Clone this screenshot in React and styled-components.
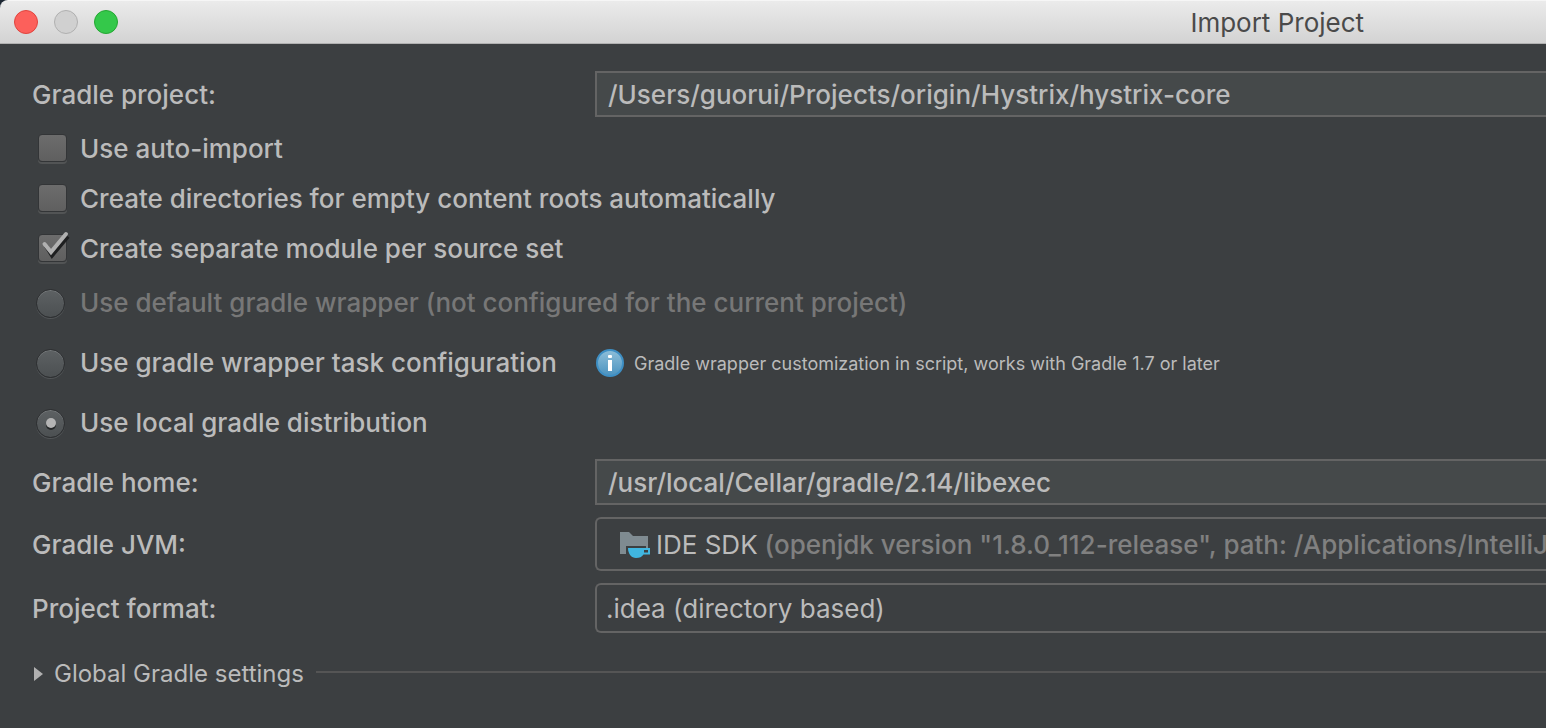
import React, { useState } from "react";
import styled, { createGlobalStyle } from "styled-components";

const GlobalStyle = createGlobalStyle`
  *, *::before, *::after { box-sizing: border-box; }
  html, body, #root { min-height: 100vh; }
  body {
    margin: 0;
    background: #3c3f41;
    color: #bbbbbb;
    font-family: Inter, "Liberation Sans", sans-serif;
    font-size: 26px;
    font-weight: 500;
    line-height: 32px;
    overflow-x: hidden;
  }
  input, select, button { font: inherit; color: inherit; }
`;

const Window = styled.main`
  background: #3c3f41;
  overflow: hidden;
`;

const TitleBar = styled.header`
  display: grid;
  grid-template-columns: 77% 1fr;
  align-items: center;
  height: 44px;
  background: linear-gradient(#ebebeb, #d3d3d3);
  border-top: 1px solid #f6f6f6;
  border-bottom: 1px solid #b1b1b1;
  border-top-left-radius: 8px;
`;

const Corner = styled.div`
  background: #1d2733;
`;

const Lights = styled.div`
  display: flex;
  gap: 16px;
  padding-left: 14px;
`;

const Light = styled.button`
  width: 24px;
  height: 24px;
  padding: 0;
  border-radius: 50%;
  border: 1px solid ${(p) => p.$edge};
  background: ${(p) => p.$fill};
`;

const Title = styled.h1`
  margin: 0;
  padding-top: 2px;
  font-size: 26px;
  line-height: 32px;
  font-weight: 400;
  color: #4a4a4a;
  white-space: nowrap;
`;

const Form = styled.form`
  display: flex;
  flex-direction: column;
  padding: 27px 0 32px 32px;
`;

const FieldRow = styled.div`
  display: grid;
  grid-template-columns: 563px 1fr;
  align-items: center;
`;

const FieldLabel = styled.label`
  padding-top: 2px;
`;

const Fields = styled.div`
  display: flex;
  flex-direction: column;
  gap: 12px;
  margin-top: 6px;
`;

const TextField = styled.input`
  width: 100%;
  min-width: 0;
  height: 46px;
  padding: 0 11px;
  border: 2px solid #646464;
  border-right: 0;
  border-radius: 0;
  background: #45494a;
  outline: none;
`;

const Combo = styled.div`
  display: flex;
  align-items: center;
  min-width: 0;
  height: ${(p) => p.$height}px;
  padding-top: 2px;
  padding-left: ${(p) => p.$inset}px;
  border: 2px solid #646464;
  border-right: 0;
  border-radius: 6px 0 0 6px;
  overflow: hidden;
`;

const ComboPrefix = styled.label`
  margin: 0 7px 0 6px;
  font-weight: 400;
  white-space: nowrap;
`;

const Select = styled.select`
  flex: 1;
  min-width: 0;
  height: 100%;
  padding: 0;
  border: 0;
  appearance: none;
  background: transparent;
  outline: none;
  text-overflow: clip;
  font-weight: ${(p) => (p.$dim ? 500 : 400)};
  color: ${(p) => (p.$dim ? "#808080" : "#bbbbbb")};
`;

const Options = styled.div`
  display: flex;
  flex-direction: column;
  margin-top: ${(p) => p.$top}px;
`;

const OptionRow = styled.div`
  display: grid;
  grid-template-columns: 563px 1fr;
  align-items: center;
  height: ${(p) => p.$height}px;
`;

const OptionLabel = styled.label`
  display: flex;
  align-items: center;
  white-space: nowrap;
  color: ${(p) => (p.$disabled ? "#777777" : "#bbbbbb")};
`;

const Marker = styled.span`
  position: relative;
  display: flex;
  flex: none;
  width: 48px;
  padding-left: ${(p) => p.$inset}px;
  padding-bottom: ${(p) => p.$lift}px;
`;

const CheckInput = styled.input`
  appearance: none;
  width: 29px;
  height: 28px;
  margin: 0;
  border: 1px solid #333537;
  border-radius: 4px;
  background: linear-gradient(#6c6c6c, #5f5f5f);
  box-shadow: 0 2px 0 #525455;
`;

const CheckMark = styled.svg`
  position: absolute;
  left: 8px;
  top: -4px;
  pointer-events: none;
`;

const RadioInput = styled.input`
  appearance: none;
  display: grid;
  place-items: center;
  width: 29px;
  height: 29px;
  margin: 0;
  border: 1px solid #2c2e30;
  border-radius: 50%;
  background: linear-gradient(#5d6163, #4c5052);
  box-shadow: inset 0 1px 0 #74787a, 0 1px 0 #525557;

  &:checked::before {
    content: "";
    width: 10px;
    height: 10px;
    border-radius: 50%;
    background: #b4b4b4;
    box-shadow: 0 2px 0 #252728;
  }
`;

const Hint = styled.p`
  display: flex;
  align-items: center;
  gap: 10px;
  margin: 0;
  font-size: 18px;
  font-weight: 400;
  line-height: 24px;
  white-space: nowrap;
`;

const HintText = styled.span`
  padding-top: 2px;
`;

const Section = styled.div`
  display: flex;
  align-items: center;
  gap: 12px;
  margin-top: 25px;
`;

const Disclosure = styled.button`
  display: flex;
  align-items: center;
  gap: 11px;
  padding: 0;
  border: 0;
  background: none;
  font-size: 24px;
  font-weight: 400;
  line-height: 32px;
  white-space: nowrap;
`;

const Rule = styled.hr`
  flex: 1;
  height: 2px;
  margin: 0 0 4px;
  border: 0;
  background: #555555;
`;

function CheckOption({ id, label, initial = false }) {
  const [on, setOn] = useState(initial);
  return (
    <OptionLabel htmlFor={id}>
      <Marker $inset={6} $lift={2}>
        <CheckInput id={id} type="checkbox" checked={on} onChange={(e) => setOn(e.target.checked)} />
        {on && (
          <CheckMark width="30" height="32" viewBox="0 0 30 32" fill="none" aria-hidden="true">
            <path d="M6 16L12 25.500L28 6.500" stroke="#1e1f20" strokeWidth="4" />
            <path d="M4.500 14L11 22L26 4" stroke="#b0b0b0" strokeWidth="4" strokeLinecap="round" />
          </CheckMark>
        )}
      </Marker>
      {label}
    </OptionLabel>
  );
}

function RadioOption({ id, label, disabled, selected, onSelect }) {
  return (
    <OptionLabel htmlFor={id} $disabled={disabled}>
      <Marker $inset={4} $lift={0}>
        <RadioInput
          id={id}
          type="radio"
          name="distribution"
          disabled={disabled}
          checked={selected === id}
          onChange={() => onSelect(id)}
        />
      </Marker>
      {label}
    </OptionLabel>
  );
}

function InfoIcon() {
  return (
    <svg width="29" height="28" viewBox="0 0 29 28" aria-hidden="true">
      <defs>
        <linearGradient id="info" x1="0" y1="0" x2="0" y2="1">
          <stop offset="0" stopColor="#8fbfd9" />
          <stop offset="1" stopColor="#4a92bf" />
        </linearGradient>
      </defs>
      <circle cx="15" cy="14" r="13" fill="url(#info)" stroke="#3e8fc4" strokeWidth="2" />
      <rect x="13" y="6" width="4" height="3" rx="1" fill="#fff" />
      <rect x="13" y="11" width="4" height="11" fill="#fff" />
    </svg>
  );
}

function SdkIcon() {
  return (
    <svg width="31" height="28" viewBox="0 0 31 28" aria-hidden="true">
      <path d="M1 1H10L14 5H29V17H7V23H1Z" fill="#7f8b91" />
      <path d="M7 15H27V17H9V23H7Z" fill="#3c3f41" />
      <path
        fillRule="evenodd"
        d="M9 17H31V23.500H24.500C23 26 20.500 27 17 27C12.500 27 9 23 9 17ZM25 19V21.500H29V19Z"
        fill="#40b6e0"
      />
    </svg>
  );
}

export default function App() {
  const [distribution, setDistribution] = useState("local");
  return (
    <Window>
      <GlobalStyle />
      <Corner>
        <TitleBar>
          <Lights>
            <Light type="button" aria-label="Close" $fill="#fc605b" $edge="#e0443e" />
            <Light type="button" aria-label="Minimize" $fill="#d0d0d0" $edge="#b0b0b0" />
            <Light type="button" aria-label="Zoom" $fill="#34c84a" $edge="#24a732" />
          </Lights>
          <Title>Import Project</Title>
        </TitleBar>
      </Corner>
      <Form>
        <FieldRow>
          <FieldLabel htmlFor="project">Gradle project:</FieldLabel>
          <TextField id="project" defaultValue="/Users/guorui/Projects/origin/Hystrix/hystrix-core" />
        </FieldRow>
        <Options $top={7}>
          <OptionRow $height={50}>
            <CheckOption id="auto-import" label="Use auto-import" />
          </OptionRow>
          <OptionRow $height={50}>
            <CheckOption id="directories" label="Create directories for empty content roots automatically" />
          </OptionRow>
          <OptionRow $height={50}>
            <CheckOption id="modules" label="Create separate module per source set" initial />
          </OptionRow>
        </Options>
        <Options $top={-1}>
          <OptionRow $height={60}>
            <RadioOption
              id="default"
              label="Use default gradle wrapper (not configured for the current project)"
              disabled
              selected={distribution}
              onSelect={setDistribution}
            />
          </OptionRow>
          <OptionRow $height={60}>
            <RadioOption
              id="task"
              label="Use gradle wrapper task configuration"
              selected={distribution}
              onSelect={setDistribution}
            />
            <Hint>
              <InfoIcon />
              <HintText>Gradle wrapper customization in script, works with Gradle 1.7 or later</HintText>
            </Hint>
          </OptionRow>
          <OptionRow $height={60}>
            <RadioOption
              id="local"
              label="Use local gradle distribution"
              selected={distribution}
              onSelect={setDistribution}
            />
          </OptionRow>
        </Options>
        <Fields>
          <FieldRow>
            <FieldLabel htmlFor="home">Gradle home:</FieldLabel>
            <TextField id="home" defaultValue="/usr/local/Cellar/gradle/2.14/libexec" />
          </FieldRow>
          <FieldRow>
            <FieldLabel htmlFor="jvm">Gradle JVM:</FieldLabel>
            <Combo $height={54} $inset={22}>
              <SdkIcon />
              <ComboPrefix htmlFor="jvm">IDE SDK</ComboPrefix>
              <Select id="jvm" $dim>
                <option>(openjdk version "1.8.0_112-release", path: /Applications/IntelliJ</option>
              </Select>
            </Combo>
          </FieldRow>
          <FieldRow>
            <FieldLabel htmlFor="format">Project format:</FieldLabel>
            <Combo $height={50} $inset={9}>
              <Select id="format">
                <option>.idea (directory based)</option>
              </Select>
            </Combo>
          </FieldRow>
        </Fields>
        <Section>
          <Disclosure type="button" aria-expanded="false">
            <svg width="11" height="14" viewBox="0 0 11 14" aria-hidden="true">
              <path d="M2 0L11 7L2 14Z" fill="#b0b0b0" />
            </svg>
            Global Gradle settings
          </Disclosure>
          <Rule />
        </Section>
      </Form>
    </Window>
  );
}
